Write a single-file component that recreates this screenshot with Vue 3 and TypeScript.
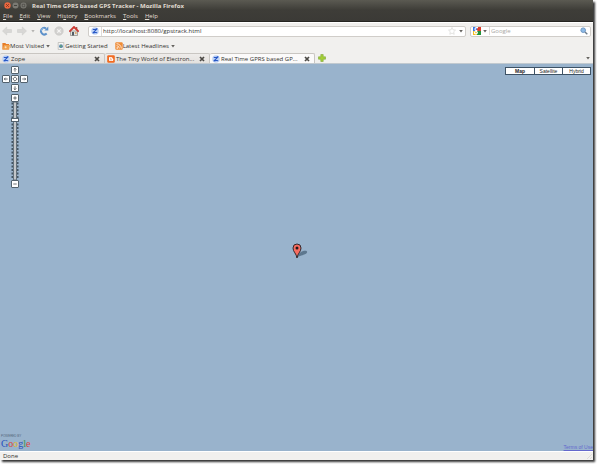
<script setup lang="ts">
import { ref } from 'vue'

const menus = ['File', 'Edit', 'View', 'History', 'Bookmarks', 'Tools', 'Help']
const accessIndex = [0, 0, 0, 2, 0, 0, 0]
const tabs = [
  { title: 'Zope', icon: 'zope' },
  { title: 'The Tiny World of Electron...', icon: 'blogger' },
  { title: 'Real Time GPRS based GP...', icon: 'zope' },
]
const activeTab = ref(2)
const mapTypes = ['Map', 'Satellite', 'Hybrid']
const mapType = ref('Map')
const address = ref('http://localhost:8080/gpstrack.html')
const search = ref('')
const zoomLevel = ref(14)
const ticks = Array.from({ length: 22 }, (_, i) => i * 3.5 + 1.5)
</script>

<template>
  <div class="page">
    <div class="window">
      <header class="chrome">
        <div class="titlebar">
          <button class="dot close" aria-label="Close window"><svg viewBox="0 0 7 7"><circle cx="3.5" cy="3.5" r="3.2" fill="#ec683f" /><path d="M2.2 2.2l2.6 2.6M4.8 2.2L2.2 4.8" stroke="#7c3420" /></svg></button>
          <button class="dot" aria-label="Minimize window"><svg viewBox="0 0 7 7"><circle cx="3.5" cy="3.5" r="3" fill="#7b7a73" /><path d="M2 3.5h3" stroke="#45443f" /></svg></button>
          <button class="dot" aria-label="Maximize window"><svg viewBox="0 0 7 7"><circle cx="3.5" cy="3.5" r="3" fill="#7b7a73" /><path d="M2.2 2.2h2.6v2.6H2.2z" fill="none" stroke="#45443f" stroke-width=".7" /></svg></button>
          <span class="title">Real Time GPRS based GPS Tracker - Mozilla Firefox</span>
        </div>
        <nav class="menubar">
          <button v-for="(m, i) in menus" :key="m">{{ m.slice(0, accessIndex[i]) }}<u>{{ m[accessIndex[i]] }}</u>{{ m.slice(accessIndex[i] + 1) }}</button>
        </nav>
      </header>

      <div class="toolbar">
        <div class="nav">
          <button class="arrow" aria-label="Back"><svg viewBox="0 0 10 10"><path d="M.5 5L4.7 1v2.5h4.8v3H4.7V9z" fill="#d8d7d5" stroke="#cbcac8" stroke-width=".5" /></svg></button>
          <button class="arrow" aria-label="Forward"><svg viewBox="0 0 10 10"><path d="M9.5 5L5.3 1v2.5H.5v3h4.8V9z" fill="#d8d7d5" stroke="#cbcac8" stroke-width=".5" /></svg></button>
          <button class="small" aria-label="Recent pages"><svg viewBox="0 0 4 4"><path d="M.3 1h3.4L2 3.5z" fill="#b5b4b2" /></svg></button>
          <button class="arrow" aria-label="Reload"><svg viewBox="0 0 10 10"><path d="M7.7 7.5A3.3 3.3 0 1 1 7 2.3" fill="none" stroke="#5d91ca" stroke-width="2" /><path d="M5.3 4.6h4V.6z" fill="#5d91ca" /><path d="M2.2 5A2.8 2.8 0 0 1 5 2.2" fill="none" stroke="#9fc5ea" stroke-width=".7" /></svg></button>
          <button class="arrow" aria-label="Stop"><svg viewBox="0 0 10 10"><circle cx="5" cy="5" r="4.2" fill="#d3d2d0" stroke="#c4c3c1" stroke-width=".6" /><path d="M3.3 3.3l3.4 3.4M6.7 3.3L3.3 6.7" stroke="#f6f5f4" stroke-width="1.2" /></svg></button>
          <button class="arrow" aria-label="Home"><svg viewBox="0 0 10 10"><path d="M1.5 5h7v4.5h-7z" fill="#e4e2df" stroke="#777570" stroke-width=".6" /><path d="M7 1h1.3v3H7z" fill="#9d5b50" /><path d="M.3 5.7L5 1l4.7 4.7" fill="none" stroke="#cc3932" stroke-width="1.9" /><path d="M3 6h2v3.5H3z" fill="#535c65" /><path d="M6 6.2h1.6v1.6H6z" fill="#dc9a54" /></svg></button>
        </div>
        <label class="field location">
          <svg class="favicon" viewBox="0 0 8 8"><circle cx="4" cy="4" r="3.8" fill="#bfd3f5" /><path d="M1.8 2.3Q4 3 6.3 1.7L1.7 6.1Q4 5 6.2 5.7" fill="none" stroke="#2455c5" stroke-width="1.1" /></svg>
          <input v-model="address" aria-label="Location">
          <button class="arrow" aria-label="Bookmark this page"><svg viewBox="0 0 10 10"><path d="M5 1.5l1 2.3 2.5.3-1.8 1.7.5 2.5L5 7.1 2.8 8.3l.5-2.5L1.5 4.1 4 3.8z" fill="#fff" stroke="#d9d8d6" stroke-width=".7" /></svg></button>
          <button class="small" aria-label="Show history"><svg viewBox="0 0 4 4"><path d="M.2 1h3.6L2 3.5z" fill="#65635f" /></svg></button>
        </label>
        <div class="field search">
          <button class="engine" aria-label="Choose search engine">
            <svg class="favicon" viewBox="0 0 8 8"><path d="M0 0h4v4H0z" fill="#3777e5" /><path d="M4 0h4v4H4z" fill="#dc3c2b" /><path d="M0 4h4v4H0z" fill="#f5bd20" /><path d="M4 4h4v4H4z" fill="#24933a" /><path d="M5 .6H3.5C1.7.6 1.3 3.5 3.6 3.5c-.9 1 .8 1 .8 2 0 1.8-3 1.7-3 .2 0-1 1-1.3 2.4-1.2" fill="none" stroke="#fff" stroke-width="1.1" /></svg>
            <svg class="caret" viewBox="0 0 4 4"><path d="M.2 1h3.6L2 3.5z" fill="#65635f" /></svg>
          </button>
          <input v-model="search" placeholder="Google" aria-label="Search Google">
          <button class="favbtn" aria-label="Search"><svg viewBox="0 0 8 8"><circle cx="3.2" cy="3.2" r="2.3" fill="#8fbbe6" stroke="#6f98c5" /><path d="M5 5l2.3 2.3" stroke="#6d7c8c" stroke-width="1.4" /></svg></button>
        </div>
      </div>

      <nav class="bookmarks">
        <button><svg class="favicon" viewBox="0 0 8 8"><path d="M.4 1h3l.7 1h3v5.4H.4z" fill="#e77d27" /><path d="M.5 7.5L2 3h6L7 7.5z" fill="#f1a14d" /><circle cx="3.6" cy="5.2" r="1" fill="#fbe0b8" /></svg>Most Visited<svg class="caret" viewBox="0 0 4 4"><path d="M.2 1h3.6L2 3.5z" fill="#65635f" /></svg></button>
        <a href="#"><svg class="favicon" viewBox="0 0 8 8"><path d="M1.2.5h5.6v7H1.2z" fill="#f7f7f5" stroke="#aaa9a5" stroke-width=".6" /><circle cx="4" cy="4.2" r="1.9" fill="#5a86aa" /><path d="M3 3.6l1-.7.8 1-.9 1.6z" fill="#62ad6b" /></svg>Getting Started</a>
        <button><svg class="favicon" viewBox="0 0 8 8"><rect x=".3" y=".3" width="7.4" height="7.4" rx="1" fill="#ef8b35" /><circle cx="2.2" cy="6" r=".8" fill="#fff" /><path d="M1.5 3.7a2.8 2.8 0 0 1 2.8 2.8M1.5 1.7a4.8 4.8 0 0 1 4.8 4.8" fill="none" stroke="#fff" stroke-width=".8" /></svg>Latest Headlines<svg class="caret" viewBox="0 0 4 4"><path d="M.2 1h3.6L2 3.5z" fill="#65635f" /></svg></button>
      </nav>

      <div class="tabs">
        <div v-for="(tab, i) in tabs" :key="tab.title" class="tab" :class="{ active: i === activeTab }">
          <button class="tab-main" @click="activeTab = i">
            <svg v-if="tab.icon === 'zope'" class="favicon" viewBox="0 0 8 8"><circle cx="4" cy="4" r="3.8" fill="#bfd3f5" /><path d="M1.8 2.3Q4 3 6.3 1.7L1.7 6.1Q4 5 6.2 5.7" fill="none" stroke="#2455c5" stroke-width="1.1" /></svg>
            <svg v-else class="favicon" viewBox="0 0 8 8"><rect x=".2" y=".2" width="7.6" height="7.6" rx="1.2" fill="#f26b21" /><path d="M2 2.8Q2 2 2.8 2h1.4q1.4 0 1.4 1.5.7 0 .7.7v.9Q6.3 6 5.2 6H2.8Q2 6 2 5.2z" fill="#fff" /><path d="M3 3.2h1.4M3 4.8h2" stroke="#f26b21" stroke-width=".6" /></svg>
            <span>{{ tab.title }}</span>
          </button>
          <button class="tab-close" :aria-label="`Close ${tab.title}`"><svg viewBox="0 0 6 6"><path d="M1 1l4 4M5 1L1 5" stroke="#4b4945" stroke-width="1.7" /></svg></button>
        </div>
        <button class="favbtn new-tab" aria-label="New tab"><svg viewBox="0 0 8 8"><path d="M2.8.5h2.4v2.3h2.3v2.4H5.2v2.3H2.8V5.2H.5V2.8h2.3z" fill="#a4ce35" stroke="#7fa83a" stroke-width=".6" /></svg></button>
        <button class="small all-tabs" aria-label="List all tabs"><svg viewBox="0 0 4 4"><path d="M.2 1h3.6L2 3.5z" fill="#65635f" /></svg></button>
      </div>

      <main class="map">
        <div class="controls">
          <div class="pan">
            <button class="north" aria-label="Pan up"><svg viewBox="0 0 7 7"><path d="M3.5 5.5v-4M2 3l1.5-1.5L5 3" /></svg></button>
            <button class="west" aria-label="Pan left"><svg viewBox="0 0 7 7"><path d="M5.5 3.5h-4M3 2L1.5 3.5 3 5" /></svg></button>
            <button class="center" aria-label="Return to last result"><svg viewBox="0 0 7 7"><path d="M3.5 1l2.5 2.5L3.5 6 1 3.5z" /></svg></button>
            <button class="east" aria-label="Pan right"><svg viewBox="0 0 7 7"><path d="M1.5 3.5h4M4 2l1.5 1.5L4 5" /></svg></button>
            <button class="south" aria-label="Pan down"><svg viewBox="0 0 7 7"><path d="M3.5 1.5v4M2 4l1.5 1.5L5 4" /></svg></button>
          </div>
          <button aria-label="Zoom in" @click="zoomLevel++"><svg viewBox="0 0 7 7"><path d="M3.5 1.5v4M1.5 3.5h4" /></svg></button>
          <div class="slider">
            <svg viewBox="0 0 8 78" aria-hidden="true">
              <path v-for="y in ticks" :key="y" :d="`M.5 ${y}h7`" stroke="#435463" stroke-width="2" />
              <path d="M2.5 0h3v78h-3z" fill="#c2c6c9" stroke="#64717b" />
            </svg>
            <input v-model.number="zoomLevel" type="range" min="0" max="18" aria-label="Map zoom">
          </div>
          <button aria-label="Zoom out" @click="zoomLevel--"><svg viewBox="0 0 7 7"><path d="M1.5 3.5h4" /></svg></button>
        </div>

        <div class="types">
          <button v-for="t in mapTypes" :key="t" :class="{ selected: t === mapType }" @click="mapType = t">{{ t }}</button>
        </div>

        <svg class="marker" viewBox="0 0 18 16" role="img" aria-label="Tracker position">
          <path d="M5 14.5C7 11 8 8.5 12 7.8c4-.5 4 2 1 3.5-2 1-5 1.3-8 3.2z" fill="#526c83" opacity=".85" />
          <path d="M5 15C4.5 10.6 1 8.9 1 5a4 4 0 0 1 8 0C9 8.9 5.5 10.6 5 15z" fill="#f76c60" stroke="#33272a" />
          <circle cx="5" cy="5" r="1.5" fill="#241719" />
        </svg>

        <a class="google" href="#" aria-label="Powered by Google">
          <span class="powered">POWERED BY</span>
          <span class="logo"><b>G</b><b>o</b><b>o</b><b>g</b><b>l</b><b>e</b></span>
        </a>
        <a class="terms" href="#">Terms of Use</a>
      </main>

      <footer class="status"><span>Done</span><svg viewBox="0 0 8 8" aria-hidden="true"><path d="M7 2L2 7M7 5L5 7" stroke="#dedcd9" /></svg></footer>
    </div>
  </div>
</template>

<style>
body { background: #fff; }
</style>

<style scoped>
* { box-sizing: border-box; }
.page { min-height: 100vh; display: flex; padding: 0 4px 4px 0; overflow: hidden; font: 6px/8px "Open Sans", sans-serif; color: #33322f; }
.window { flex: 1; min-width: 0; display: flex; flex-direction: column; background: #f1f0ee; box-shadow: 2px 2px 2px #333; }
button, input { font: inherit; color: inherit; border: 0; margin: 0; padding: 0; background: none; min-width: 0; }
button, a { display: flex; align-items: center; }
a { color: inherit; text-decoration: none; }
svg { display: block; flex: none; }
button > svg { width: 100%; }
.favicon, button > .favicon { width: 8px; height: 8px; }
.caret, button > .caret { width: 4px; height: 4px; }
.favbtn { width: 8px; height: 8px; flex: none; }
.arrow { width: 10px; height: 10px; flex: none; }
.small { width: 4px; height: 4px; flex: none; }

.chrome { background: linear-gradient(#5b5a52, #3e3d38 10px, #3b3a36); color: #e2ded4; border-bottom: 1px solid #252421; }
.titlebar { height: 11px; display: flex; align-items: center; padding-left: 4px; gap: 1px; }
.dot { width: 7px; height: 7px; }
.title { padding-left: 4px; font-weight: 700; white-space: nowrap; }
.menubar { height: 10px; display: flex; align-items: center; gap: 7px; padding-left: 3px; }
.menubar button { display: block; white-space: nowrap; }
.menubar u { text-decoration-thickness: 1px; text-underline-offset: 1px; }

.toolbar { height: 17px; display: flex; align-items: center; gap: 4px; padding: 0 2px; border-top: 1px solid #fff; }
.nav { display: flex; align-items: center; gap: 5px; width: 82px; }
.nav .small { margin: 0 -1px; }
.field { display: flex; align-items: center; height: 11px; background: #fff; border: 1px solid #d0cdc9; border-radius: 2px; }
.field input { flex: 1; height: 9px; outline: 0; }
.field input::placeholder { color: #aaa8a5; opacity: 1; }
.location { flex: 1; gap: 2px; padding: 0 2px; }
.location input { border-left: 1px solid #dedcd9; padding-left: 1px; }
.search { width: 121px; padding: 0 2px; gap: 1px; }
.engine { gap: 2px; padding-right: 2px; border-right: 1px solid #dedcd9; }

.bookmarks { height: 14px; display: flex; align-items: center; gap: 7px; padding-left: 2px; }
.bookmarks button, .bookmarks a { gap: 0; white-space: nowrap; }
.bookmarks .caret { margin-left: 2px; }

.tabs { height: 11px; display: flex; align-items: center; border-bottom: 1px solid #c1c9cf; }
.tab { width: 105px; height: 10px; display: flex; align-items: center; padding: 0 4px 0 2px; background: linear-gradient(#eeecea, #e4e1de); border: 1px solid #c9c6c2; border-bottom: 0; border-left: 0; border-radius: 2px 2px 0 0; }
.tab.active { background: #fbfafa; }
.tab-main { flex: 1; gap: 1px; text-align: left; white-space: nowrap; }
.tab-close { width: 6px; height: 6px; flex: none; }
.new-tab { margin-left: 3px; }
.all-tabs { margin: 0 3px 0 auto; }

.map { flex: 1; position: relative; background: #99b3cc; font-family: "Liberation Sans", sans-serif; }
.controls { position: absolute; left: 2px; top: 2px; display: flex; flex-direction: column; align-items: center; }
.controls button { width: 8px; height: 8px; padding: 0; background: #fff; border: 1px solid #53626e; border-radius: 1px; }
.controls button path { fill: none; stroke: #52575c; stroke-width: 1; }
.pan { display: grid; grid-template-columns: repeat(3, 8px); gap: 1px; margin-bottom: 2px; }
.north, .south { grid-column: 2; }
.west { grid-column: 1; }
.slider { position: relative; height: 78px; width: 8px; }
.slider svg { width: 8px; height: 78px; }
.slider input { position: absolute; inset: 0; width: 8px; height: 78px; writing-mode: vertical-lr; direction: rtl; appearance: none; }
.slider input::-webkit-slider-thumb { appearance: none; width: 8px; height: 4px; background: #fff; border: 1px solid #53626e; }
.types { position: absolute; right: 2px; top: 3px; width: 86px; display: grid; grid-template-columns: repeat(3, 1fr); border: 1px solid #3d5265; background: #fff; }
.types button { justify-content: center; height: 6px; font-size: 5px; line-height: 6px; color: #222; }
.types button + button { border-left: 1px solid #3d5265; }
.types .selected { font-weight: 700; }
.marker { position: absolute; left: calc(50% - 5px); top: calc(50% - 15px); width: 18px; height: 16px; }
.google { position: absolute; left: 1px; bottom: 2px; display: block; }
.powered { display: block; font-size: 3px; line-height: 3px; color: #52667a; }
.logo { display: flex; font: 10px/11px "Liberation Serif", serif; }
.logo b { font-weight: 400; color: #2851bc; }
.logo b:nth-child(2), .logo b:nth-child(6) { color: #d84340; }
.logo b:nth-child(3) { color: #e5b82e; }
.logo b:nth-child(5) { color: #329553; }
.terms { position: absolute; right: 0; bottom: 1px; font-size: 5px; line-height: 6px; color: #6468cc; text-decoration: underline; }
.status { height: 9px; display: flex; align-items: center; justify-content: space-between; padding-left: 3px; border-top: 1px solid #fff; }
.status svg { width: 8px; height: 8px; }
</style>
